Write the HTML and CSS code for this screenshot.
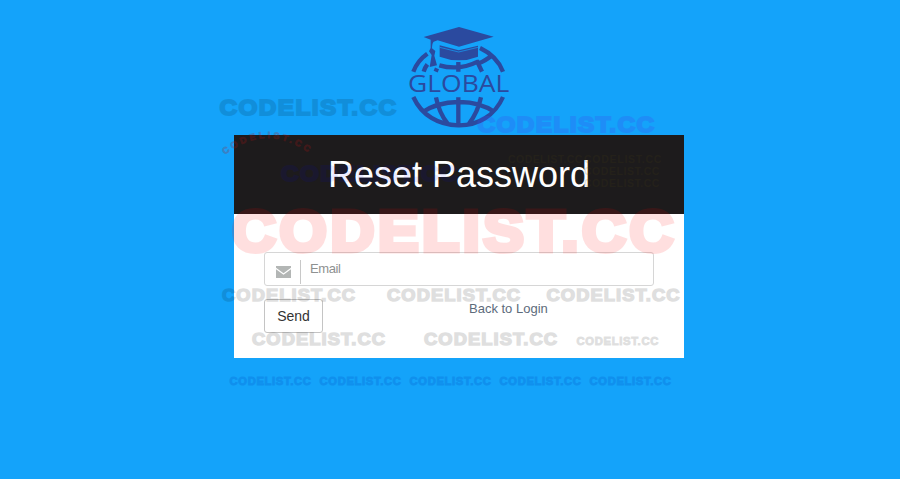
FILE: index.html
```html
<!DOCTYPE html>
<html lang="en">
<head>
<meta charset="utf-8">
<title>Reset Password</title>
<link rel="stylesheet" href="styles.css">
</head>
<body>
<main class="page">
  <svg class="logo" viewBox="0 0 360 345" role="img" aria-label="Global">
    <g fill="none" stroke="#2b4a9f" stroke-width="13">
      <path d="M40 155Q52 122 82 101M240 84Q291 108 309 155M71 155Q75 142 82 133M111 145L107 155M118 136Q177 153 235 124M175 126V155M230 121L246 155M275 107Q254 123 238 129"/>
      <path d="M40 231C65 286 115 315 175 316S285 286 309 231M67 277Q110 247 175 246T285 277M175 232V315M108 232Q117 278 143 311M243 232Q233 278 207 311"/>
    </g>
    <g fill="#2b4a9f">
      <path d="M71 51L177 21L281 50L177 80L113 61L101 65Q96 70 96 85L106 93L103 107L111 136L89 141L95 105L87 94L92 84V59Z"/>
      <path d="M119 76L176 91L234 77V110Q177 132 119 110Z"/>
    </g>
    <path d="M119 82L176 96L234 82" fill="none" stroke="#14a2fa" stroke-width="2"/>
    <text class="logo-name" x="24" y="215" textLength="304" lengthAdjust="spacingAndGlyphs">GLOBAL</text>
  </svg>
  <section class="card">
    <h1 class="card-title">Reset Password</h1>
    <form class="card-body">
      <label class="field">
        <span class="field-icon">
          <svg class="mail" viewBox="0 0 15 12"><path fill="#b3b6b5" d="M0 0H15V1.8L7.5 7.3L0 1.8ZM0 3.2L7.5 8.7L15 3.2V12H0Z"/></svg>
        </span>
        <span class="placeholder">Email</span>
      </label>
      <div class="actions">
        <button class="send" type="button">Send</button>
        <a class="back">Back to Login</a>
      </div>
    </form>
  </section>
  <svg class="watermarks" viewBox="0 0 900 479" aria-hidden="true">
    <defs><path id="arc" d="M225 155Q269 119 318 160"/></defs>
    <g class="gray">
      <text x="219.500" y="114.500" font-size="22.500" textLength="178" lengthAdjust="spacingAndGlyphs">CODELIST.CC</text>
      <text x="222" y="300.500" font-size="17" textLength="134" lengthAdjust="spacingAndGlyphs">CODELIST.CC</text>
      <text x="387" y="300.500" font-size="17" textLength="134" lengthAdjust="spacingAndGlyphs">CODELIST.CC</text>
      <text x="546.500" y="300.500" font-size="17" textLength="134" lengthAdjust="spacingAndGlyphs">CODELIST.CC</text>
      <text x="252" y="344.500" font-size="17" textLength="134" lengthAdjust="spacingAndGlyphs">CODELIST.CC</text>
      <text x="424" y="344.500" font-size="17" textLength="134" lengthAdjust="spacingAndGlyphs">CODELIST.CC</text>
      <text x="576.500" y="345" font-size="10.500" textLength="82.500" lengthAdjust="spacingAndGlyphs">CODELIST.CC</text>
    </g>
    <g class="blue small">
      <text x="229.500" y="384.500" textLength="82" lengthAdjust="spacingAndGlyphs">CODELIST.CC</text>
      <text x="319.500" y="384.500" textLength="82" lengthAdjust="spacingAndGlyphs">CODELIST.CC</text>
      <text x="409.500" y="384.500" textLength="82" lengthAdjust="spacingAndGlyphs">CODELIST.CC</text>
      <text x="499.500" y="384.500" textLength="82" lengthAdjust="spacingAndGlyphs">CODELIST.CC</text>
      <text x="589.500" y="384.500" textLength="82" lengthAdjust="spacingAndGlyphs">CODELIST.CC</text>
    </g>
    <text class="indigo" x="477.500" y="131.500" font-size="22.500" textLength="178" lengthAdjust="spacingAndGlyphs">CODELIST.CC</text>
    <text class="navy" x="281" y="181" font-size="22.500" textLength="178" lengthAdjust="spacingAndGlyphs">CODELIST.CC</text>
    <text class="red" x="232" y="251" font-size="58" textLength="445" lengthAdjust="spacingAndGlyphs">CODELIST.CC</text>
    <text class="arc" font-size="9" letter-spacing="2.500"><textPath href="#arc">CODELIST.CC</textPath></text>
    <g class="olive small">
      <text x="508" y="163" textLength="75">CODELIST.CC</text>
      <text x="584" y="163" textLength="78">CODELIST.CC</text>
      <text x="584" y="175" textLength="76">CODELIST.CC</text>
      <text x="584" y="187" textLength="76">CODELIST.CC</text>
    </g>
  </svg>
</main>
</body>
</html>
```
FILE: styles.css
```css
* { box-sizing: border-box; }
body {
  margin: 0;
  background: #14a3fa;
  font-family: "Liberation Sans", Arial, sans-serif;
}
.page {
  position: relative;
  height: 479px;
  padding-top: 20px;
  overflow: hidden;
}
.logo {
  display: block;
  width: 120px;
  height: 115px;
  margin-left: 400px;
}
.logo-name {
  font: 69px "Open Sans", sans-serif;
  fill: #2b4a9f;
}
.card {
  width: 450px;
  height: 223px;
  margin-left: 234px;
  background: #fff;
}
.card-title {
  height: 79px;
  margin: 0;
  background: #1d1b1c;
  color: #fff;
  font-size: 36px;
  font-weight: 400;
  line-height: 79px;
  text-align: center;
}
.card-body { padding: 38px 30px 0; }
.field {
  display: flex;
  height: 34px;
  border: 1px solid #d6d6d6;
  border-radius: 3px;
}
.field-icon {
  width: 36px;
  height: 24px;
  margin-top: 7px;
  padding: 6px 0 0 11px;
  border-right: 1px solid #c8c8c8;
}
.mail {
  display: block;
  width: 15px;
  height: 12px;
}
.placeholder {
  padding-left: 9px;
  color: #8e9191;
  font-size: 13px;
  line-height: 32px;
  letter-spacing: -.4px;
}
.actions {
  display: flex;
  margin-top: 13px;
}
.send {
  width: 59px;
  height: 34px;
  padding: 0;
  border: 1px solid #c4c4c4;
  border-radius: 3px;
  background: #fff;
  color: #333;
  font: 14px "Liberation Sans", Arial, sans-serif;
}
.back {
  margin-left: 146px;
  color: #5d6b7b;
  font-size: 13px;
  line-height: 19px;
}
.watermarks {
  position: absolute;
  top: 0;
  left: 0;
  width: 900px;
  height: 479px;
  pointer-events: none;
  font-family: "Liberation Sans", Arial, sans-serif;
  font-weight: 700;
}
.watermarks text { stroke-width: .085em; letter-spacing: .06em; }
.watermarks .arc { letter-spacing: 3px; }
.gray { fill: #000; stroke: #000; opacity: .12; }
.small { font-size: 10.5px; }
.blue { fill: #0046be; stroke: #0046be; opacity: .2; }
.indigo { fill: #3c50f0; stroke: #3c50f0; opacity: .25; }
.navy { fill: #00f; stroke: #00f; opacity: .08; }
.red { fill: #f00; stroke: #f00; opacity: .12; }
.arc { fill: #b41414; stroke: #b41414; opacity: .24; }
.olive { fill: #504614; opacity: .14; }
```
